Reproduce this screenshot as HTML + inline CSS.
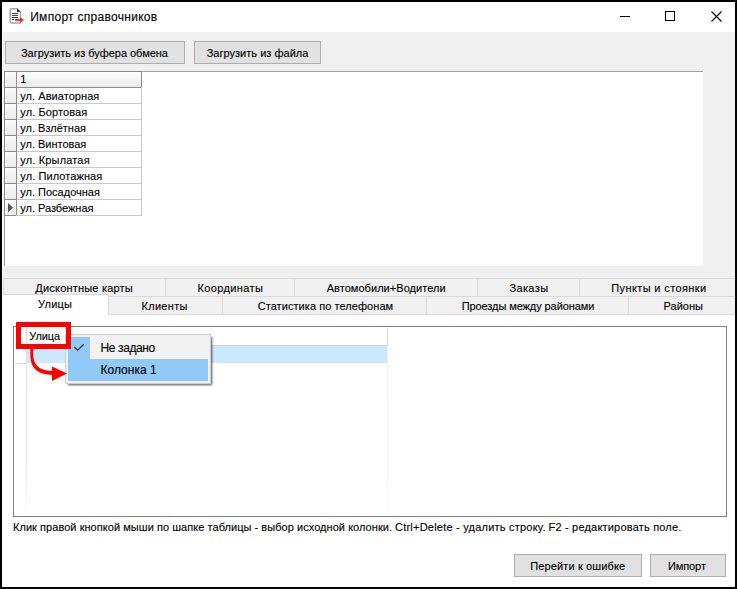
<!DOCTYPE html>
<html><head><meta charset="utf-8">
<style>
html,body{margin:0;padding:0;}
body{width:737px;height:589px;position:relative;overflow:hidden;background:#000;font-family:"Liberation Sans",sans-serif;font-size:11px;color:#000;}
.a{position:absolute;box-sizing:border-box;}
.t{position:absolute;white-space:nowrap;-webkit-text-stroke:0.12px #000;}
.btn{position:absolute;box-sizing:border-box;background:#e1e1e1;border:1px solid #adadad;}
.tab{position:absolute;box-sizing:border-box;background:#f0f0f0;border-top:1px solid #d9d9d9;border-left:1px solid #d9d9d9;}
.rh{position:absolute;box-sizing:border-box;left:4px;width:13px;height:17px;border:1px solid #8c8c8c;background:linear-gradient(#fbfbfb,#ebebeb);box-shadow:inset 1px 1px 0 #fff;}
.dc{position:absolute;box-sizing:border-box;left:16px;width:126px;height:17px;border-right:1px solid #c8c8c8;border-bottom:1px solid #c8c8c8;}
</style></head><body>

<div class="a" style="left:2px;top:2px;width:733px;height:585px;background:#fff;"></div>
<svg class="a" style="left:0;top:0" width="30" height="30" viewBox="0 0 30 30">
<path d="M10.2 10.2 Q10.2 8.8 11.6 8.8 H17.2 L20.5 12.1 V22.2 Q20.5 23 19.7 23 H11.6 Q10.2 23 10.2 21.6 Z" fill="#fff" stroke="#a3a3a3" stroke-width="1.5"/>
<path d="M17 8.6 V11.9 H20.6 Z" fill="#2f2f2f"/>
<path d="M11.9 13.4H18M11.9 15.4H18M11.9 17.5H18M11.9 19.5H14" stroke="#333" stroke-width="1"/>
<path d="M15 19.1 H20 V17.1 L24.1 20.1 L20 23.1 V21.1 H15 Z" fill="#e53a3a"/>
</svg>
<div class="t" style="left:30.20px;top:10.84px;font-size:12px;line-height:12px;height:12px;letter-spacing:0.289px;">Импорт справочников</div>
<div class="a" style="left:620px;top:16px;width:10px;height:1px;background:#000"></div>
<div class="a" style="left:665px;top:11px;width:10px;height:10px;border:1px solid #000"></div>
<svg class="a" style="left:711px;top:11px" width="11" height="11" viewBox="0 0 11 11"><path d="M0.5 0.5L10.5 10.5M10.5 0.5L0.5 10.5" stroke="#000" stroke-width="1.1" fill="none"/></svg>
<div class="a" style="left:3px;top:32px;width:732px;height:282px;background:#f0f0f0"></div>
<div class="btn" style="left:5px;top:41px;width:180px;height:23px"></div>
<div class="t" style="left:21.00px;top:47.69px;font-size:11px;line-height:11px;height:11px;letter-spacing:-0.02px;">Загрузить из буфера обмена</div>
<div class="btn" style="left:194px;top:41px;width:127px;height:23px"></div>
<div class="t" style="left:206.70px;top:47.69px;font-size:11px;line-height:11px;height:11px;letter-spacing:0.018px;">Загрузить из файла</div>
<div class="a" style="left:4px;top:71px;width:699px;height:195px;background:#fff;border-top:1px solid #a0a0a0;border-left:1px solid #a0a0a0"></div>
<div class="a" style="left:16px;top:71px;width:126px;height:17px;border:1px solid #8c8c8c;background:linear-gradient(#ffffff,#ebebeb);box-shadow:inset 1px 1px 0 #fff"></div>
<div class="t" style="left:20.30px;top:73.69px;font-size:11px;line-height:11px;height:11px;letter-spacing:0.054px;">1</div>
<div class="rh" style="top:71px"></div>
<div class="rh" style="top:87px"></div>
<div class="dc" style="top:87px"></div>
<div class="t" style="left:20.30px;top:90.69px;font-size:11px;line-height:11px;height:11px;letter-spacing:0.054px;">ул. Авиаторная</div>
<div class="rh" style="top:103px"></div>
<div class="dc" style="top:103px"></div>
<div class="t" style="left:20.30px;top:106.69px;font-size:11px;line-height:11px;height:11px;letter-spacing:0.091px;">ул. Бортовая</div>
<div class="rh" style="top:119px"></div>
<div class="dc" style="top:119px"></div>
<div class="t" style="left:20.30px;top:122.69px;font-size:11px;line-height:11px;height:11px;letter-spacing:-0.009px;">ул. Взлётная</div>
<div class="rh" style="top:135px"></div>
<div class="dc" style="top:135px"></div>
<div class="t" style="left:20.30px;top:138.69px;font-size:11px;line-height:11px;height:11px;letter-spacing:-0.018px;">ул. Винтовая</div>
<div class="rh" style="top:151px"></div>
<div class="dc" style="top:151px"></div>
<div class="t" style="left:20.30px;top:154.69px;font-size:11px;line-height:11px;height:11px;letter-spacing:0.164px;">ул. Крылатая</div>
<div class="rh" style="top:167px"></div>
<div class="dc" style="top:167px"></div>
<div class="t" style="left:20.30px;top:170.69px;font-size:11px;line-height:11px;height:11px;letter-spacing:0.085px;">ул. Пилотажная</div>
<div class="rh" style="top:183px"></div>
<div class="dc" style="top:183px"></div>
<div class="t" style="left:20.30px;top:186.69px;font-size:11px;line-height:11px;height:11px;letter-spacing:0.0px;">ул. Посадочная</div>
<div class="rh" style="top:199px"></div>
<div class="dc" style="top:199px"></div>
<div class="t" style="left:20.30px;top:202.69px;font-size:11px;line-height:11px;height:11px;letter-spacing:-0.017px;">ул. Разбежная</div>
<svg class="a" style="left:8px;top:203px" width="6" height="10" viewBox="0 0 6 10"><path d="M0 0L5 4.7L0 9.4Z" fill="#555"/></svg>
<div class="tab" style="left:3px;top:278px;width:162px;height:19px"></div>
<div class="t" style="left:35.30px;top:283.39px;font-size:11px;line-height:11px;height:11px;letter-spacing:0.2px;">Дисконтные карты</div>
<div class="tab" style="left:165px;top:278px;width:129px;height:19px"></div>
<div class="t" style="left:197.60px;top:283.39px;font-size:11px;line-height:11px;height:11px;letter-spacing:0.367px;">Координаты</div>
<div class="tab" style="left:294px;top:278px;width:183px;height:19px"></div>
<div class="t" style="left:326.70px;top:283.39px;font-size:11px;line-height:11px;height:11px;letter-spacing:0.044px;">Автомобили+Водители</div>
<div class="tab" style="left:477px;top:278px;width:102px;height:19px"></div>
<div class="t" style="left:509.40px;top:283.39px;font-size:11px;line-height:11px;height:11px;letter-spacing:0.38px;">Заказы</div>
<div class="tab" style="left:579px;top:278px;width:156px;height:19px"></div>
<div class="t" style="left:611.30px;top:283.39px;font-size:11px;line-height:11px;height:11px;letter-spacing:0.38px;">Пункты и стоянки</div>
<div class="a" style="left:3px;top:314px;width:732px;height:273px;background:#fff;border-top:1px solid #d9d9d9"></div>
<div class="tab" style="left:108px;top:296px;width:114px;height:19px;border-bottom:1px solid #d9d9d9"></div>
<div class="t" style="left:141.50px;top:300.69px;font-size:11px;line-height:11px;height:11px;letter-spacing:0.3px;">Клиенты</div>
<div class="tab" style="left:222px;top:296px;width:204px;height:19px;border-bottom:1px solid #d9d9d9"></div>
<div class="t" style="left:257.70px;top:300.69px;font-size:11px;line-height:11px;height:11px;letter-spacing:0.064px;">Статистика по телефонам</div>
<div class="tab" style="left:426px;top:296px;width:202px;height:19px;border-bottom:1px solid #d9d9d9"></div>
<div class="t" style="left:461.70px;top:300.69px;font-size:11px;line-height:11px;height:11px;letter-spacing:-0.086px;">Проезды между районами</div>
<div class="tab" style="left:628px;top:296px;width:107px;height:19px;border-bottom:1px solid #d9d9d9"></div>
<div class="t" style="left:663.60px;top:300.69px;font-size:11px;line-height:11px;height:11px;letter-spacing:0.0px;">Районы</div>
<div class="a" style="left:3px;top:294px;width:106px;height:21px;background:#fff;border-top:1px solid #d9d9d9;border-right:1px solid #d9d9d9"></div>
<div class="t" style="left:38.10px;top:298.99px;font-size:11px;line-height:11px;height:11px;letter-spacing:0.2px;">Улицы</div>
<div class="a" style="left:13px;top:326px;width:714px;height:191px;border:1px solid #828282;background:#fff"></div>
<div class="a" style="left:26px;top:327px;width:1px;height:186px;background:linear-gradient(#e0e0e0 0%,#e6e6e6 70%,#fafafa 100%)"></div>
<div class="a" style="left:26px;top:327px;width:1px;height:18px;background:#d6d6d6"></div>
<div class="a" style="left:387px;top:327px;width:1px;height:186px;background:linear-gradient(#f0f0f0 0%,#f2f2f2 70%,#fdfdfd 100%)"></div>
<div class="a" style="left:387px;top:328px;width:1px;height:18px;background:#d6d6d6"></div>
<div class="a" style="left:27px;top:345px;width:361px;height:1px;background:#d6d6d6"></div>
<div class="a" style="left:27px;top:346px;width:360px;height:17px;background:#cce8ff"></div>
<div class="a" style="left:15px;top:363px;width:12px;height:1px;background:#dcdcdc"></div>
<div class="t" style="left:29.20px;top:330.69px;font-size:11px;line-height:11px;height:11px;letter-spacing:-0.05px;">Улица</div>
<div class="a" style="left:68px;top:337px;width:144px;height:48px;background:rgba(0,0,0,0.68);filter:blur(1px)"></div>
<div class="a" style="left:65px;top:334px;width:146px;height:50px;background:#f2f2f2;border:1px solid #cccccc"></div>
<div class="a" style="left:68px;top:337px;width:22px;height:22px;background:#91c9f7"></div>
<div class="a" style="left:68px;top:359px;width:140px;height:22px;background:#91c9f7"></div>
<svg class="a" style="left:72px;top:342px" width="14" height="12" viewBox="0 0 14 12"><path d="M2.3 5.1L5.7 8.2L11.8 2.3" stroke="#333" stroke-width="1.3" fill="none"/></svg>
<div class="t" style="left:100.50px;top:341.64px;font-size:12px;line-height:12px;height:12px;letter-spacing:-0.387px;">Не задано</div>
<div class="t" style="left:100.50px;top:364.24px;font-size:12px;line-height:12px;height:12px;letter-spacing:0.012px;">Колонка 1</div>
<div class="a" style="left:16px;top:322px;width:55px;height:27px;border:5px solid #ff0000"></div>
<svg class="a" style="left:0;top:0" width="737" height="589" viewBox="0 0 737 589">
<path d="M30.3 348 L30.4 356 C30.6 367 36.5 374.8 53 375 L53 371.1 C41 371 33.8 366 33.3 356 L33.2 348 Z" fill="#ff0000"/>
<path d="M52 366.5 L67 373.5 L52 381 Z" fill="#ff0000"/>
</svg>
<div class="t" style="left:13.00px;top:521.69px;font-size:11px;line-height:11px;height:11px;letter-spacing:0.047px;">Клик правой кнопкой мыши по шапке таблицы - выбор исходной колонки.</div>
<div class="t" style="left:395.00px;top:521.69px;font-size:11px;line-height:11px;height:11px;letter-spacing:0.221px;">Ctrl+Delete - удалить строку.</div>
<div class="t" style="left:548.50px;top:521.69px;font-size:11px;line-height:11px;height:11px;letter-spacing:0.196px;">F2 - редактировать поле.</div>
<div class="btn" style="left:514px;top:554px;width:128px;height:23px"></div>
<div class="t" style="left:530.30px;top:560.69px;font-size:11px;line-height:11px;height:11px;letter-spacing:0.12px;">Перейти к ошибке</div>
<div class="btn" style="left:650px;top:554px;width:76px;height:23px"></div>
<div class="t" style="left:667.90px;top:560.69px;font-size:11px;line-height:11px;height:11px;letter-spacing:-0.08px;">Импорт</div>
</body></html>
